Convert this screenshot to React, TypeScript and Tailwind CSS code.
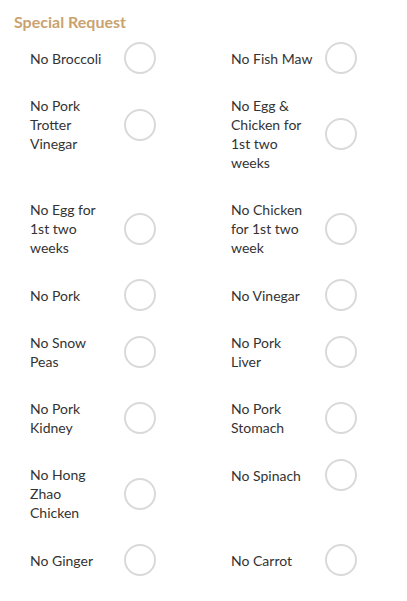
import React, { useState } from "react";

const items: [string, string][] = [
  ["No Broccoli", "No Fish Maw"],
  ["No Pork Trotter Vinegar", "No Egg & Chicken for 1st two weeks"],
  ["No Egg for 1st two weeks", "No Chicken for 1st two week"],
  ["No Pork", "No Vinegar"],
  ["No Snow Peas", "No Pork Liver"],
  ["No Pork Kidney", "No Pork Stomach"],
  ["No Hong Zhao Chicken", "No Spinach"],
  ["No Ginger", "No Carrot"],
];

const Option = ({
  label,
  checked,
  onToggle,
}: {
  label: string;
  checked: boolean;
  onToggle: () => void;
}) => (
  <div className="flex items-center cursor-pointer" onClick={onToggle}>
    <span className="w-[82px] mr-[12px] py-[6px] text-[14px] leading-[19px] text-[#333333]">
      {label}
    </span>
    <span
      className={`w-8 h-8 rounded-full border-2 shrink-0 ${
        checked ? "border-[#c9a36f] bg-[#c9a36f]" : "border-[#d9d9d9] bg-white"
      }`}
    />
  </div>
);

export default function App() {
  const [selected, setSelected] = useState<string[]>([]);

  const toggle = (name: string) =>
    setSelected((prev) =>
      prev.includes(name) ? prev.filter((n) => n !== name) : [...prev, name]
    );

  return (
    <div
      className="w-[407px] min-h-[601px] bg-white pt-[10px]"
      style={{ fontFamily: "Lato, 'Open Sans', sans-serif" }}
    >
      <h2 className="pl-[14px] text-[16px] leading-[24px] font-bold text-[#c9a36f]">
        Special Request
      </h2>

      {/* Options grid */}
      <div className="mt-[8px] pl-[30px] grid grid-cols-[201px_1fr] gap-y-4 items-start">
        {items.map(([left, right]) => (
          <React.Fragment key={left}>
            <Option
              label={left}
              checked={selected.includes(left)}
              onToggle={() => toggle(left)}
            />
            <Option
              label={right}
              checked={selected.includes(right)}
              onToggle={() => toggle(right)}
            />
          </React.Fragment>
        ))}
      </div>
    </div>
  );
}
